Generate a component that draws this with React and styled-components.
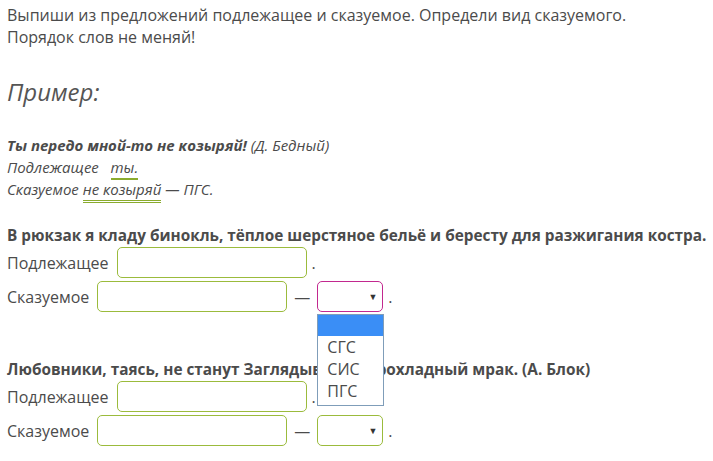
import React from 'react'
import styled, { createGlobalStyle } from 'styled-components'

const Global = createGlobalStyle`
    body {
        margin: 0;
        background: #fff;
        font-family: "Open Sans", "Liberation Sans", sans-serif;
        font-size: 16px;
        color: #4b4b4b;
    }
`

const Page = styled.div`
    padding: 4px 7px 0 7px;
    line-height: 22px;
`

const Task = styled.p`
    margin: 0;
`

const ExampleTitle = styled.h2`
    margin: 27px 0 0 0;
    font-size: 24px;
    font-weight: 400;
    font-style: italic;
    line-height: 34px;
    color: #555;
`

const Example = styled.div`
    margin-top: 25px;
    font-size: 15px;
    font-style: italic;
`

const Under = styled.span`
    border-bottom: ${({ double }) => (double ? '3px double #8aab2e' : '2px solid #8aab2e')};
    padding-bottom: 1px;
`

const Sentence = styled.div`
    margin-top: ${({ gap }) => gap}px;
    font-size: 15.35px;
    font-weight: 700;
    white-space: nowrap;
`

const Row = styled.div`
    display: flex;
    align-items: center;
    gap: 8px;
    height: 31px;
    margin-top: ${({ first }) => (first ? '1px' : '3px')};
`

const Field = styled.div`
    width: 190px;
    height: 31px;
    box-sizing: border-box;
    border: 1px solid #9bbb3c;
    border-radius: 5px;
    background: #fff;
`

const Dot = styled.span`
    margin-left: -3px;
`

const Dash = styled.span`
    margin: 0 -1px;
`

const SelectWrap = styled.div`
    position: relative;
`

const Select = styled.div`
    width: 66px;
    height: 31px;
    box-sizing: border-box;
    border: 1px solid ${({ focused }) => (focused ? '#c2288f' : '#9bbb3c')};
    border-radius: 5px;
    display: flex;
    align-items: center;
    justify-content: flex-end;
    padding-right: 5px;
    font-size: 9px;
    color: #333;
`

const Menu = styled.ul`
    position: absolute;
    top: 33px;
    left: 0;
    width: 67px;
    margin: 0;
    padding: 0 0 3px 0;
    list-style: none;
    box-sizing: border-box;
    border: 1px solid #7f9db9;
    background: #fff;
    z-index: 2;
`

const Option = styled.li`
    height: ${({ blank }) => (blank ? '21px' : '22px')};
    line-height: 22px;
    padding-left: 9px;
    background: ${({ active }) => (active ? '#3a8ef6' : '#fff')};
    font-size: 16px;
    color: #4b4b4b;
`

const Pick = ({ open }) => (
    <SelectWrap>
        <Select focused={open}>▼</Select>
        {open && (
            <Menu>
                <Option blank active />
                <Option>СГС</Option>
                <Option>СИС</Option>
                <Option>ПГС</Option>
            </Menu>
        )}
    </SelectWrap>
)

const Block = ({ text, open, gap }) => (
    <>
        <Sentence gap={gap}>{text}</Sentence>
        <Row first>
            Подлежащее <Field /> <Dot>.</Dot>
        </Row>
        <Row>
            Сказуемое <Field /> <Dash>—</Dash> <Pick open={open} /> <Dot>.</Dot>
        </Row>
    </>
)

const App = () => (
    <Page>
        <Global />
        <Task>
            Выпиши из предложений подлежащее и сказуемое. Определи вид сказуемого.
            <br />
            Порядок слов не меняй!
        </Task>
        <ExampleTitle>Пример:</ExampleTitle>
        <Example>
            <b>Ты передо мной-то не козыряй!</b> (Д. Бедный)
            <br />
            Подлежащее&nbsp;&nbsp; <Under>ты.</Under>
            <br />
            Сказуемое <Under double>не козыряй</Under> — ПГС.
        </Example>
        <Block text="В рюкзак я кладу бинокль, тёплое шерстяное бельё и бересту для разжигания костра." open gap={24} />
        <Block text="Любовники, таясь, не станут Заглядывать в прохладный мрак. (А. Блок)" gap={46} />
    </Page>
)

export default App
